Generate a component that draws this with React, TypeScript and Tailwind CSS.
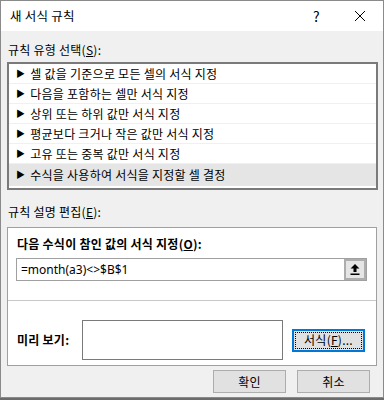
import React from "react";

const font = { fontFamily: '"Noto Sans CJK KR", "Noto Sans", sans-serif' };

const rules = [
  "셀 값을 기준으로 모든 셀의 서식 지정",
  "다음을 포함하는 셀만 서식 지정",
  "상위 또는 하위 값만 서식 지정",
  "평균보다 크거나 작은 값만 서식 지정",
  "고유 또는 중복 값만 서식 지정",
  "수식을 사용하여 서식을 지정할 셀 결정",
];

const App = () => {
  return (
    <div className="w-[384px] h-[400px] bg-[#6b6b6b] overflow-hidden tracking-[0.25px]" style={font}>
      <div className="w-[384px] h-[398px] border border-[#8a8a8a] bg-[#f0f0f0] flex flex-col text-[12px] text-black">
        {/* title bar */}
        <div className="h-[30px] bg-white flex items-center pl-[9px] shrink-0">
          <span className="text-[12.5px] leading-4">새 서식 규칙</span>
          <span className="ml-auto text-[14px] leading-4 mr-[34px]">?</span>
          <svg width="12" height="12" viewBox="0 0 12 12" className="mr-[17px]">
            <path d="M1 1 L11 11 M11 1 L1 11" stroke="#000" strokeWidth="1" />
          </svg>
        </div>

        <div className="pl-[6px] pt-[11px]">
          <p className="leading-4 ml-[1px]">
            규칙 유형 선택(<span className="underline">S</span>):
          </p>

          <div className="mt-[4px] w-[371px] h-[128px] border-2 border-[#7a7a7a] bg-white">
            {rules.map((r, i) => (
              <div
                key={r}
                className={
                  "h-[20px] flex items-center pl-[7px] border-b " +
                  (i === rules.length - 1
                    ? "bg-[#e5e5e5] border-[#e5e5e5] h-[22px]"
                    : "border-[#f0f0f0]")
                }
              >
                <span className="text-[9px] leading-none mr-[5px]">▶</span>
                <span className="leading-4">{r}</span>
              </div>
            ))}
          </div>

          <p className="leading-4 ml-[1px] mt-[14px]">
            규칙 설명 편집(<span className="underline">E</span>):
          </p>

          <div className="mt-[7px] w-[370px] h-[139px] border border-[#a0a0a0] bg-white flex flex-col">
            <p className="font-bold leading-4 ml-[9px] mt-[8px]">
              다음 수식이 참인 값의 서식 지정(<span className="underline">O</span>):
            </p>
            <div className="mt-[6px] ml-[8px] w-[351px] h-[23px] border border-[#a0a0a0] flex items-center">
              <span
                className="pl-[4px] leading-4 text-[12px] tracking-normal"
                style={{ fontFamily: '"Noto Sans", sans-serif' }}
              >
                =month(a3)&lt;&gt;$B$1
              </span>
              <div className="ml-auto w-[22px] h-[21px] border-2 border-[#adadad] bg-[#e5e5e5] flex items-center justify-center">
                <svg width="10" height="11" viewBox="0 0 10 11">
                  <path d="M5 0 L9.5 4.5 L6.5 4.5 L6.5 8 L3.5 8 L3.5 4.5 L0.5 4.5 Z" fill="#000" />
                  <rect x="0.5" y="9.5" width="9" height="1.5" fill="#000" />
                </svg>
              </div>
            </div>
            <div className="mt-[19px] h-px bg-[#c8c8c8]" />
            <div className="flex items-center mt-[19px]">
              <span className="font-bold leading-4 ml-[9px] w-[65px]">미리 보기:</span>
              <div className="w-[201px] h-[40px] border border-[#7a7a7a] bg-white" />
              <button className="ml-[9px] w-[73px] h-[23px] border-2 border-[#0078d7] bg-[#e1e1e1] p-px">
                <span className="flex items-center justify-center h-full border border-dotted border-black leading-4">
                  서식(<span className="underline">F</span>)...
                </span>
              </button>
            </div>
          </div>

          <div className="flex gap-[11px] mt-[4px] ml-[206px]">
            <button className="w-[73px] h-[23px] border border-[#adadad] bg-[#e1e1e1] leading-4">확인</button>
            <button className="w-[73px] h-[23px] border border-[#adadad] bg-[#e1e1e1] leading-4">취소</button>
          </div>
        </div>
      </div>
    </div>
  );
};

export default App;
